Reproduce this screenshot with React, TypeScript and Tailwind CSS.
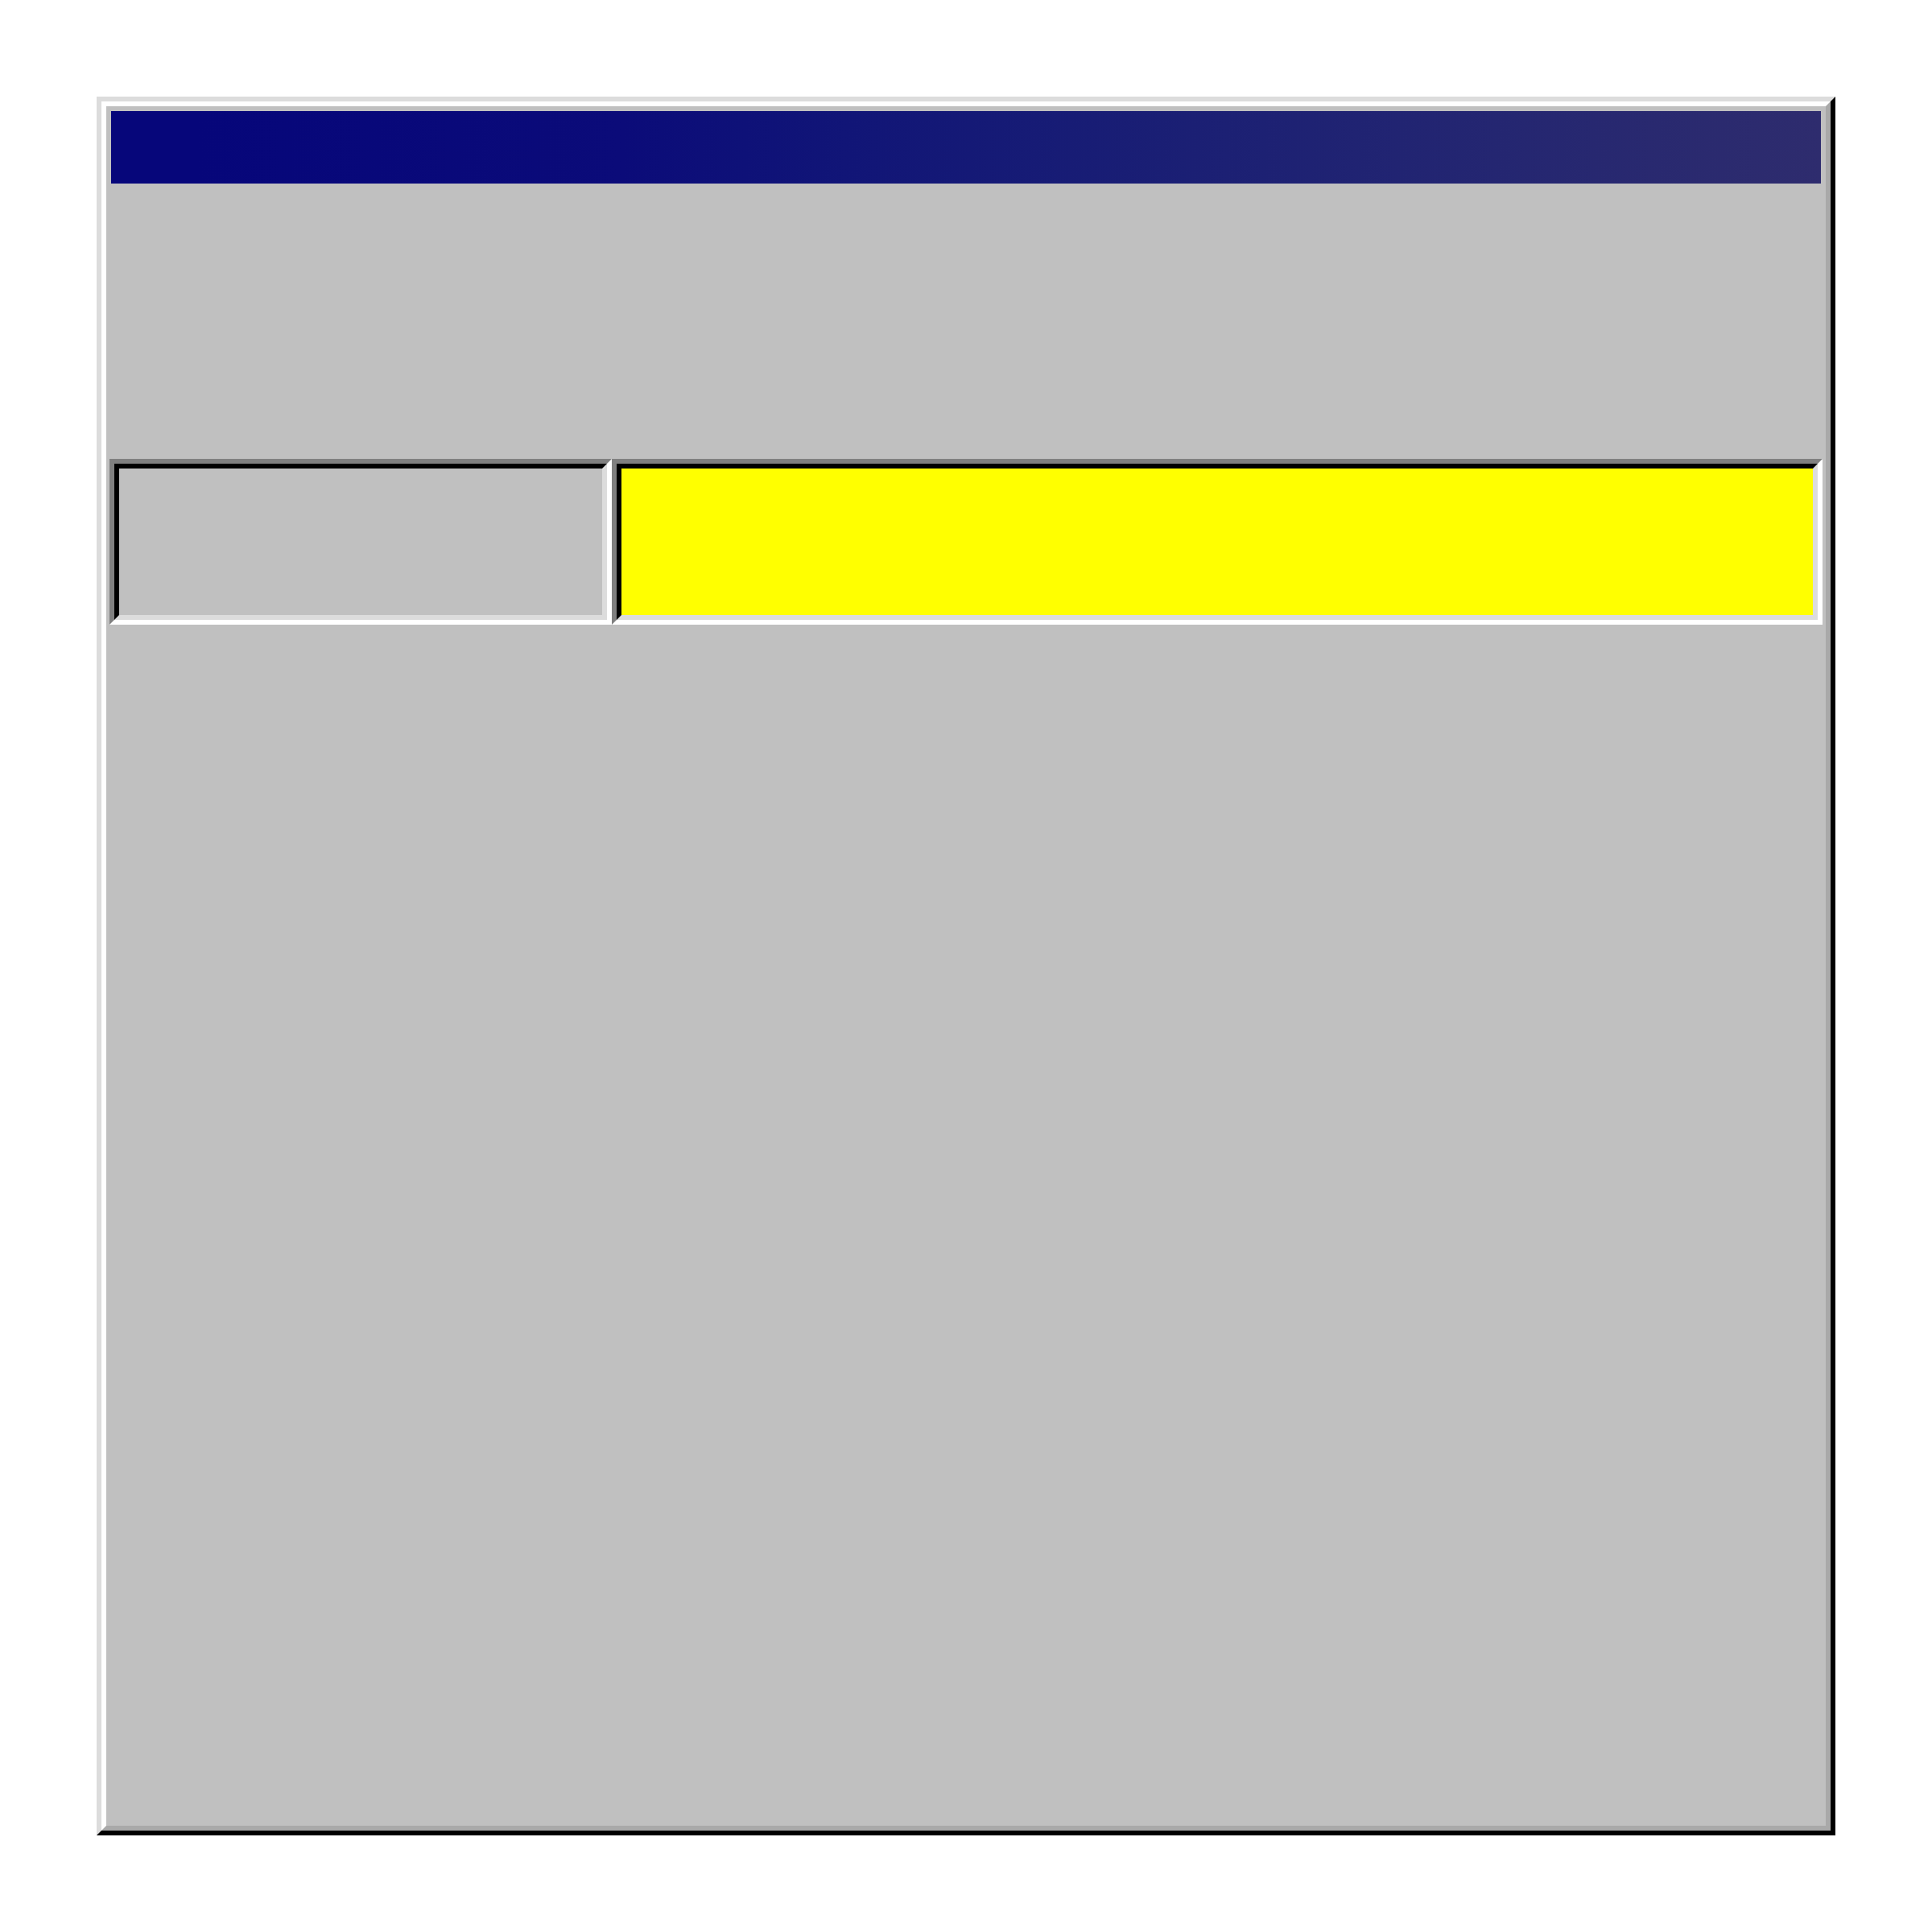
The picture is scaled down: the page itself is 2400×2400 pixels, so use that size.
const Sunken = ({ className, children }: { className: string; children?: React.ReactNode }) => (
  <div className={`h-full border-[6px] border-t-[#808080] border-l-[#808080] border-b-white border-r-white ${className}`}>
    <div className="h-full border-[6px] border-t-black border-l-black border-b-[#dcdcdc] border-r-[#dcdcdc]">{children}</div>
  </div>
);

const App = () => {
  return (
    <div className="min-h-screen bg-white p-[120px]">
      <div className="w-[2160px] h-[2160px] border-[6px] border-t-[#dcdcdc] border-l-[#dcdcdc] border-r-black border-b-black">
        <div className="h-full border-[6px] border-t-white border-l-white border-r-[#a9a9a9] border-b-[#a9a9a9] bg-[#c0c0c0] p-[6px]">
          <div className="h-[90px] bg-linear-to-r from-[#06067a] from-5% via-[#0b0b79] via-30% to-[#2e2c6e]" />
          <div className="-mx-[2px] mt-[342px] flex h-[206px]">
            <Sunken className="w-[624px] shrink-0 bg-[#c0c0c0]" />
            <Sunken className="flex-1">
              <div className="h-full bg-[#ffff00]" />
            </Sunken>
          </div>
        </div>
      </div>
    </div>
  );
};

export default App;
